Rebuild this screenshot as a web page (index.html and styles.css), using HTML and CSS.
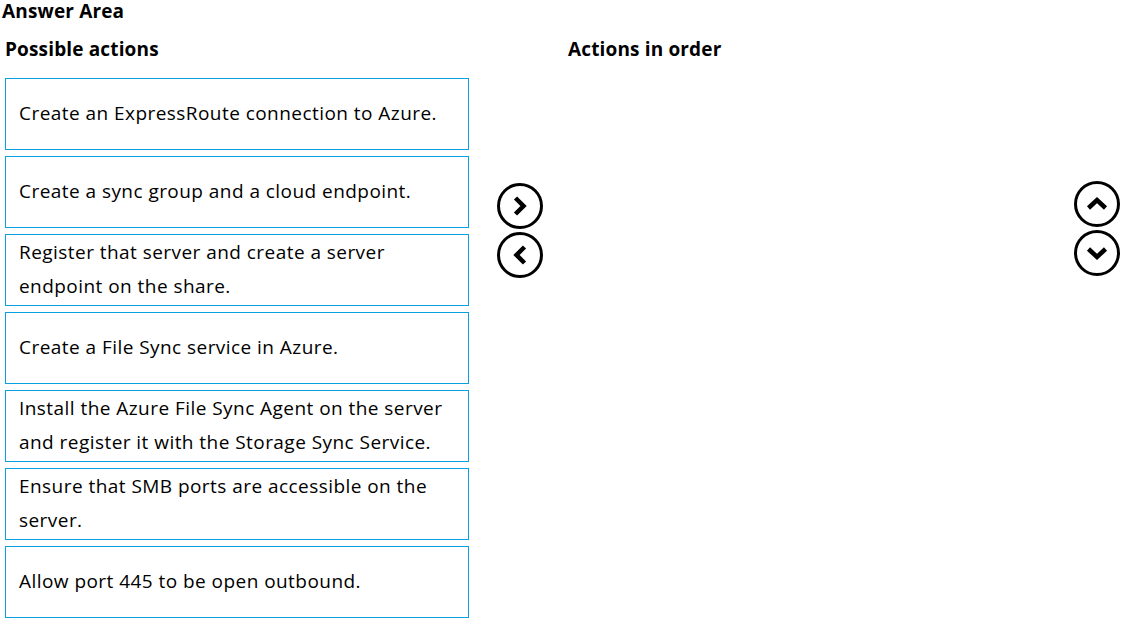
FILE: index.html
```html
<!DOCTYPE html>
<html>
<head>
<meta charset="utf-8">
<link rel="stylesheet" href="styles.css">
</head>
<body>
<div class="page">
  <div class="title">Answer Area</div>
  <div class="area">
    <div class="panel left">
      <div class="heading">Possible actions</div>
      <div class="list">
        <div class="item"><span>Create an ExpressRoute connection to Azure.</span></div>
        <div class="item"><span>Create a sync group and a cloud endpoint.</span></div>
        <div class="item"><span>Register that server and create a server endpoint on the share.</span></div>
        <div class="item"><span>Create a File Sync service in Azure.</span></div>
        <div class="item"><span>Install the Azure File Sync Agent on the server and register it with the Storage Sync Service.</span></div>
        <div class="item"><span>Ensure that SMB ports are accessible on the server.</span></div>
        <div class="item"><span>Allow port 445 to be open outbound.</span></div>
      </div>
    </div>
    <div class="controls move">
      <svg class="btn" viewBox="0 0 46 46" width="46" height="46"><circle cx="23" cy="23" r="21.5" class="ring"/><path d="M18.5 15 L26.5 23 L18.5 31" class="chev"/></svg>
      <svg class="btn" viewBox="0 0 46 46" width="46" height="46"><circle cx="23" cy="23" r="21.5" class="ring"/><path d="M27.5 15 L19.5 23 L27.5 31" class="chev"/></svg>
    </div>
    <div class="panel right">
      <div class="heading">Actions in order</div>
    </div>
    <div class="controls order">
      <svg class="btn" viewBox="0 0 46 46" width="46" height="46"><circle cx="23" cy="23" r="21.5" class="ring"/><path d="M14.5 27 L23 19 L31.5 27" class="chev"/></svg>
      <svg class="btn" viewBox="0 0 46 46" width="46" height="46"><circle cx="23" cy="23" r="21.5" class="ring"/><path d="M14.5 19 L23 27 L31.5 19" class="chev"/></svg>
    </div>
  </div>
</div>
</body>
</html>
```

FILE: styles.css
```css
html, body {
  margin: 0;
  padding: 0;
  background: #ffffff;
}
body {
  font-family: "Open Sans", "Noto Sans", sans-serif;
  color: #000000;
  width: 1124px;
  height: 624px;
  overflow: hidden;
}
.page {
  padding: 0 0 0 2px;
}
.title {
  font-weight: 700;
  font-size: 19px;
  line-height: 22px;
  letter-spacing: 0.15px;
}
.area {
  display: flex;
  flex-direction: row;
  margin-top: 14px;
}
.heading {
  font-weight: 700;
  font-size: 19px;
  line-height: 26px;
  letter-spacing: 0.15px;
  height: 26px;
}
.panel.left {
  width: 464px;
  margin-left: 3px;
}
.list {
  display: flex;
  flex-direction: column;
  gap: 6px;
  margin-top: 16px;
}
.item {
  box-sizing: border-box;
  height: 72px;
  border: 1px solid #0ba0e1;
  display: flex;
  align-items: center;
  padding: 0 16px 2px 13px;
  font-size: 19px;
  letter-spacing: 0.45px;
  line-height: 34px;
}
.controls {
  display: flex;
  flex-direction: column;
  width: 46px;
}
.controls.move {
  margin-left: 28px;
  padding-top: 147px;
  gap: 3px;
}
.controls.order {
  margin-left: auto;
  margin-right: 4px;
  padding-top: 145px;
  gap: 3px;
}
.panel.right {
  margin-left: 25px;
}
.btn {
  display: block;
}
.ring {
  fill: none;
  stroke: #000;
  stroke-width: 3;
}
.chev {
  fill: none;
  stroke: #000;
  stroke-width: 4.5;
  stroke-linecap: butt;
  stroke-linejoin: miter;
}
```
